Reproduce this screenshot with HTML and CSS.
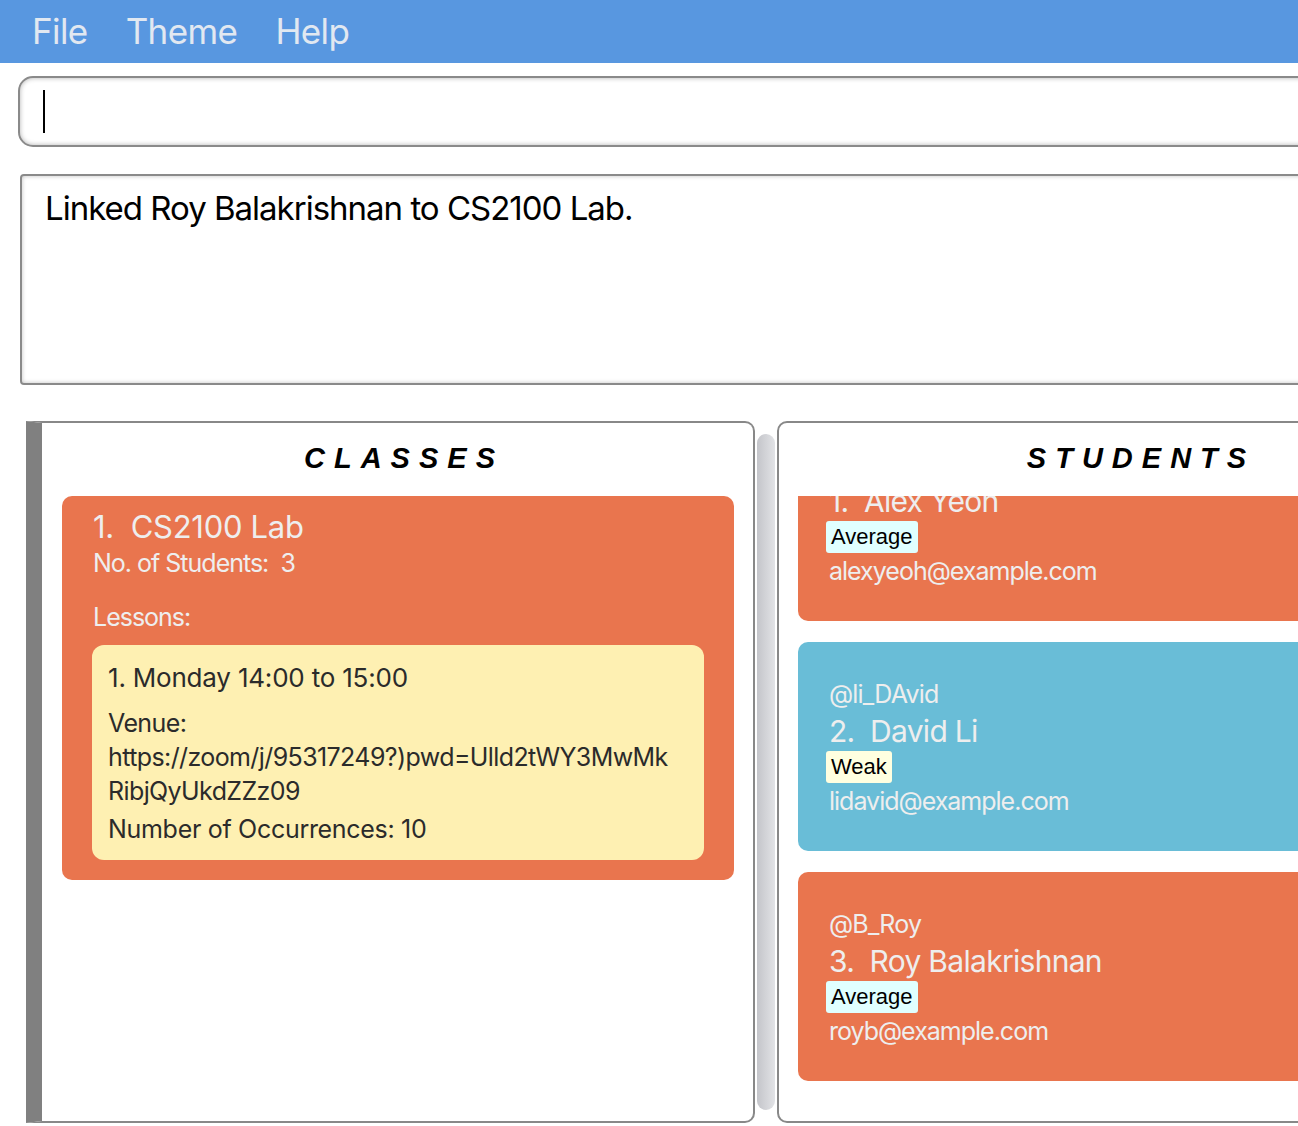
FILE: index.html
```html
<!DOCTYPE html>
<html>
<head>
<meta charset="utf-8">
<link rel="stylesheet" href="styles.css">
</head>
<body>
<div class="app">
  <nav class="menubar">
    <span class="menu-item">File</span>
    <span class="menu-item">Theme</span>
    <span class="menu-item">Help</span>
  </nav>
  <div class="command-row">
    <div class="command-box"><span class="caret"></span></div>
  </div>
  <div class="result-box">Linked Roy Balakrishnan to CS2100 Lab.</div>
  <div class="panels">
    <section class="panel panel-classes">
      <h2 class="panel-title">CLASSES</h2>
      <div class="list">
        <div class="list-inner">
          <div class="card card-orange class-card">
            <div class="card-title">1.&nbsp;&nbsp;CS2100 Lab</div>
            <div class="card-line">No. of Students:&nbsp;&nbsp;3</div>
            <div class="card-line lessons-label">Lessons:</div>
            <div class="lesson">
              <div class="lesson-title">1. Monday 14:00 to 15:00</div>
              <div class="lesson-venue">Venue:</div>
              <div class="lesson-url">https://zoom/j/95317249?)pwd=Ulld2tWY3MwMk<br>RibjQyUkdZZz09</div>
              <div class="lesson-occ">Number of Occurrences: 10</div>
            </div>
          </div>
        </div>
      </div>
    </section>
    <div class="scrollbar"></div>
    <section class="panel panel-students">
      <h2 class="panel-title">STUDENTS</h2>
      <div class="list">
        <div class="list-inner scrolled">
          <div class="card card-orange student-card">
            <div class="handle">@alexyeoh</div>
            <div class="card-title">1.&nbsp;&nbsp;Alex Yeoh</div>
            <span class="tag tag-average">Average</span>
            <div class="email">alexyeoh@example.com</div>
          </div>
          <div class="card card-blue student-card">
            <div class="handle">@li_DAvid</div>
            <div class="card-title">2.&nbsp;&nbsp;David Li</div>
            <span class="tag tag-weak">Weak</span>
            <div class="email">lidavid@example.com</div>
          </div>
          <div class="card card-orange student-card">
            <div class="handle">@B_Roy</div>
            <div class="card-title">3.&nbsp;&nbsp;Roy Balakrishnan</div>
            <span class="tag tag-average">Average</span>
            <div class="email">royb@example.com</div>
          </div>
        </div>
      </div>
    </section>
  </div>
</div>
</body>
</html>
```
FILE: styles.css
```css
* { box-sizing: border-box; }
html, body {
  margin: 0;
  padding: 0;
  width: 1298px;
  height: 1126px;
  overflow: hidden;
  background: #ffffff;
  font-family: "Inter", "Liberation Sans", sans-serif;
}
.app {
  width: 1560px;
}
.menubar {
  height: 63px;
  background: #5897e0;
  display: flex;
  align-items: center;
  gap: 38px;
  padding-left: 32px;
  padding-bottom: 2px;
}
.menu-item {
  color: #e1e8f1;
  font-size: 35px;
  letter-spacing: -0.6px;
}
.command-row {
  padding: 13px 0 0 18px;
}
.command-box {
  width: 1400px;
  height: 71px;
  border: 2px solid #8a8a8a;
  border-radius: 15px;
  box-shadow: inset 0 0 5px rgba(0,0,0,0.3);
  padding: 12px 0 0 23px;
}
.caret {
  display: block;
  width: 2px;
  height: 43px;
  background: #000;
}
.result-box {
  margin: 27px 0 0 20px;
  width: 1400px;
  height: 211px;
  border: 2px solid #8a8a8a;
  border-radius: 4px;
  box-shadow: inset 0 0 4px rgba(0,0,0,0.25);
  padding: 12px 0 0 23px;
  font-size: 33px;
  letter-spacing: -1px;
  color: #000;
}
.panels {
  display: flex;
  align-items: flex-start;
  margin: 36px 0 0 26px;
}
.panel {
  width: 729px;
  height: 702px;
  border: 2px solid #888;
  background: #fff;
  display: flex;
  flex-direction: column;
}
.panel-classes {
  border-left: 16px solid #808080;
  border-radius: 0 10px 10px 0;
}
.panel-students {
  width: 721px;
  border-radius: 10px;
}
.panel-title {
  margin: 0;
  height: 73px;
  padding-top: 19px;
  text-align: center;
  font-family: "Liberation Sans", Arial, sans-serif;
  font-style: italic;
  font-weight: bold;
  font-size: 29px;
  letter-spacing: 9px;
  color: #000;
}
.panel-classes .panel-title { padding-left: 13px; }
.panel-students .panel-title { padding-left: 7px; }
.scrollbar {
  width: 18px;
  height: 676px;
  margin: 13px 2px 0 2px;
  border-radius: 9px;
  background: linear-gradient(to right, #c4c5ca, #e2e3e6);
}
.list {
  flex: 1;
  overflow: hidden;
  padding: 0 19px 0 20px;
}
.panel-students .list {
  padding-left: 19px;
}
.list-inner.scrolled {
  margin-top: -84px;
}
.card {
  border-radius: 10px;
  color: #eeeeee;
}
.card-orange { background: #e9754e; }
.card-blue { background: #69bdd7; }
.class-card {
  padding: 12px 30px 20px 31px;
}
.card-title {
  font-size: 30px;
  letter-spacing: -0.3px;
  line-height: 38px;
}
.class-card .card-title {
  font-size: 31px;
}
.card-line {
  font-size: 25px;
  letter-spacing: -1px;
  line-height: 32px;
  margin-top: 1px;
}
.lessons-label {
  margin-top: 22px;
  margin-bottom: 12px;
}
.lesson {
  background: #fef0b2;
  border-radius: 12px;
  margin-left: -1px;
  padding: 12px 16px 14px 16px;
  color: #2b2b2b;
  font-size: 25px;
  letter-spacing: -0.6px;
}
.lesson-title { line-height: 42px; font-size: 26px; letter-spacing: -0.2px; }
.lesson-venue { line-height: 34px; margin-top: 7px; }
.lesson-url { line-height: 34px; }
.lesson-occ { line-height: 34px; margin-top: 4px; letter-spacing: -0.3px; }
.student-card {
  height: 209px;
  margin-bottom: 21px;
  padding: 34px 30px 0 31px;
}
.student-card .card-title {
  letter-spacing: -0.7px;
}
.handle {
  font-size: 25px;
  letter-spacing: -0.8px;
  line-height: 36px;
}
.tag {
  display: inline-block;
  margin-top: 1px;
  margin-left: -3px;
  font-family: "Liberation Sans", Arial, sans-serif;
  font-size: 22px;
  color: #000;
  border-radius: 3px;
  padding: 3px 5px 3px 5px;
  line-height: 26px;
}
.tag-average { background: #e0ffff; }
.tag-weak { background: #ffffe0; }
.email {
  font-size: 25px;
  letter-spacing: -1px;
  line-height: 36px;
}
```
